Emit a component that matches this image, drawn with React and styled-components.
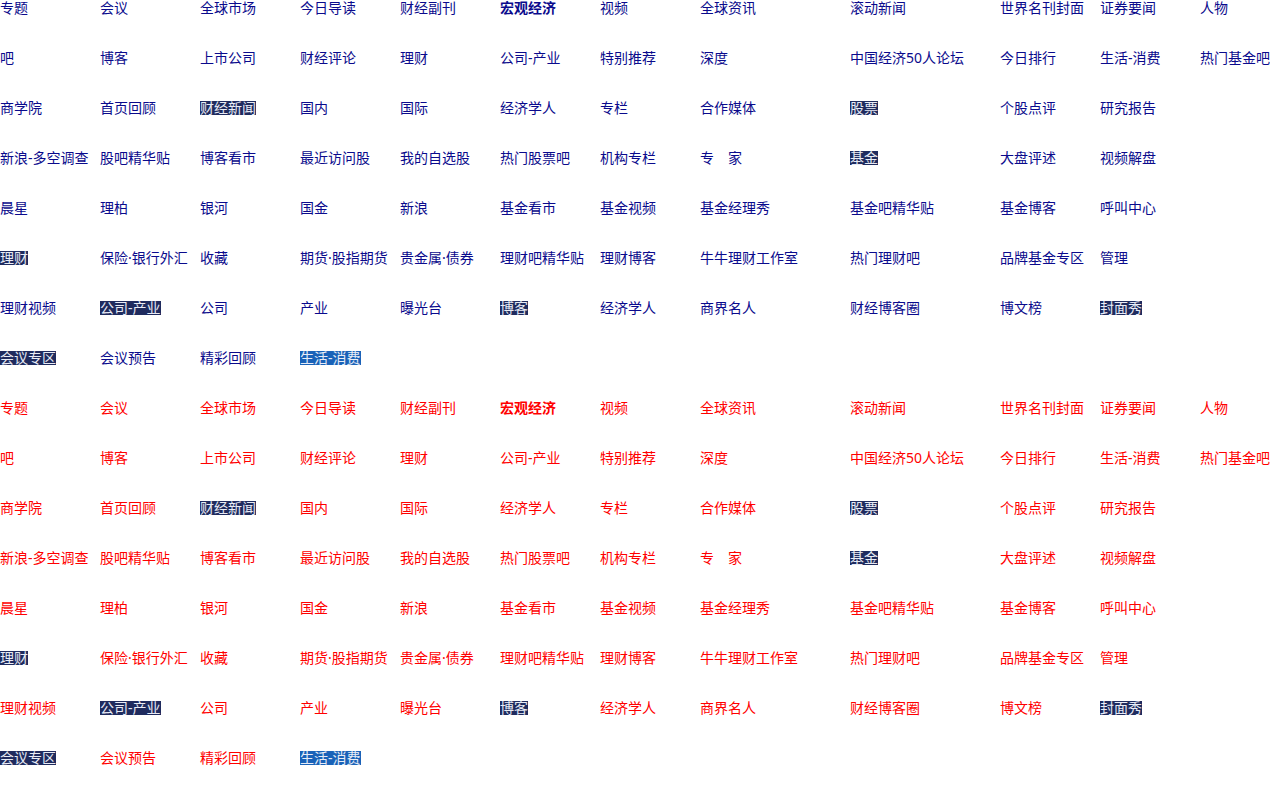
import React from 'react'
import styled, { createGlobalStyle } from 'styled-components'

const GlobalStyle = createGlobalStyle`
  html, body {
    margin: 0;
    padding: 0;
    background: #fff;
  }
  body {
    font-family: "Noto Sans", "Noto Sans CJK SC", sans-serif;
  }
`

// '*' = bold, '#' = dark highlight, '@' = blue highlight
const rows = [
  ['专题', '会议', '全球市场', '今日导读', '财经副刊', '*宏观经济', '视频', '全球资讯', '滚动新闻', '世界名刊封面', '证券要闻', '人物'],
  ['吧', '博客', '上市公司', '财经评论', '理财', '公司-产业', '特别推荐', '深度', '中国经济50人论坛', '今日排行', '生活-消费', '热门基金吧'],
  ['商学院', '首页回顾', '#财经新闻', '国内', '国际', '经济学人', '专栏', '合作媒体', '#股票', '个股点评', '研究报告'],
  ['新浪-多空调查', '股吧精华贴', '博客看市', '最近访问股', '我的自选股', '热门股票吧', '机构专栏', '专　家', '#基金', '大盘评述', '视频解盘'],
  ['晨星', '理柏', '银河', '国金', '新浪', '基金看市', '基金视频', '基金经理秀', '基金吧精华贴', '基金博客', '呼叫中心'],
  ['#理财', '保险·银行外汇', '收藏', '期货·股指期货', '贵金属·债券', '理财吧精华贴', '理财博客', '牛牛理财工作室', '热门理财吧', '品牌基金专区', '管理'],
  ['理财视频', '#公司-产业', '公司', '产业', '曝光台', '#博客', '经济学人', '商界名人', '财经博客圈', '博文榜', '#封面秀'],
  ['#会议专区', '会议预告', '精彩回顾', '@生活-消费'],
]

const Page = styled.div`
  width: 1270px;
`

const Block = styled.div`
  display: grid;
  grid-template-columns: repeat(7, 100px) 150px 150px 100px 100px 70px;
  grid-auto-rows: 50px;
`

const Cell = styled.a`
  display: block;
  font-size: 14px;
  line-height: 16px;
  white-space: nowrap;
  text-decoration: none;
  color: ${p => (p.$tone === 'red' ? '#ff0000' : '#0a0a8c')};
  font-weight: ${p => (p.$bold ? 700 : 400)};
`

const Mark = styled.span`
  display: inline-block;
  vertical-align: top;
  margin-top: 1px;
  line-height: 14px;
  height: 14px;
  color: #e8ecf6;
  background: ${p => (p.$kind === 'blue' ? '#1a62b8' : '#1f2b5e')};
`

const LinkItem = ({ label, tone }) => {
  const head = label[0]
  if (head === '#' || head === '@') {
    return (
      <Cell href="#" $tone={tone}>
        <Mark $kind={head === '@' ? 'blue' : 'dark'}>{label.slice(1)}</Mark>
      </Cell>
    )
  }
  if (head === '*') {
    return <Cell href="#" $tone={tone} $bold>{label.slice(1)}</Cell>
  }
  return <Cell href="#" $tone={tone}>{label}</Cell>
}

const LinkBlock = ({ tone }) => (
  <Block>
    {rows.map((row, i) =>
      Array.from({ length: 12 }).map((_, j) =>
        row[j] ? <LinkItem key={i + '-' + j} label={row[j]} tone={tone} /> : <div key={i + '-' + j} />
      )
    )}
  </Block>
)

export default function App() {
  return (
    <Page>
      <GlobalStyle />
      <LinkBlock tone="blue" />
      <LinkBlock tone="red" />
    </Page>
  )
}
